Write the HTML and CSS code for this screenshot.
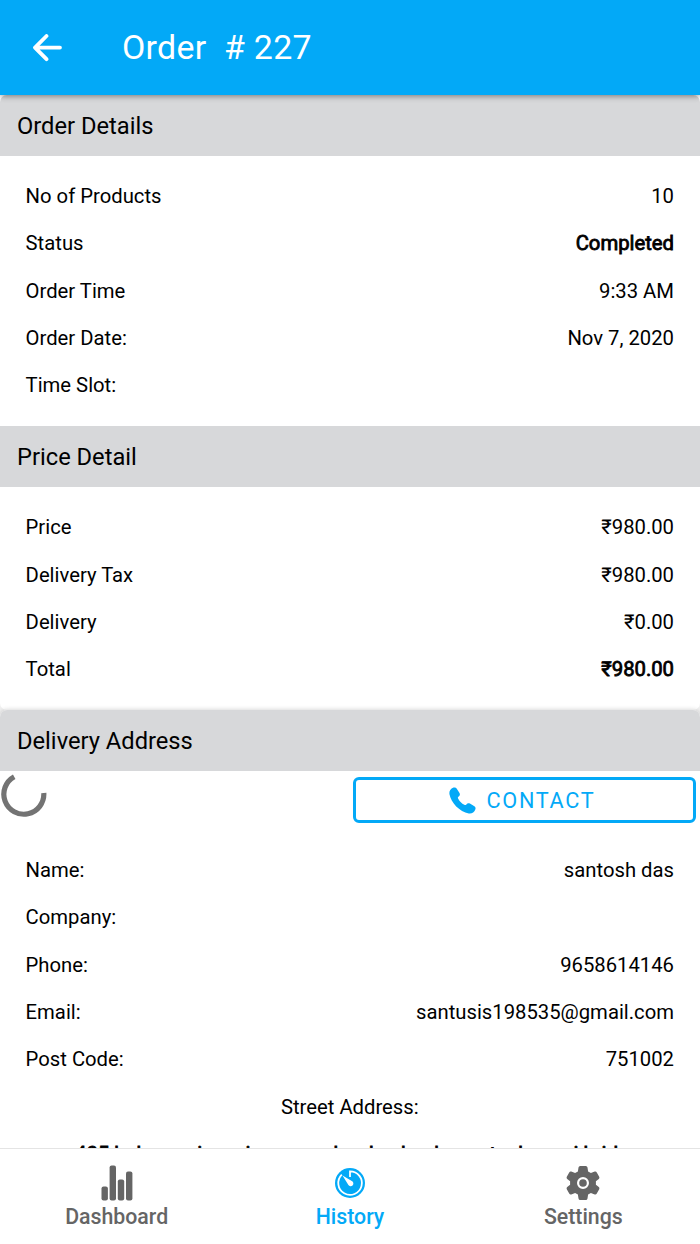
FILE: index.html
```html
<!DOCTYPE html>
<html lang="en">
<head>
<meta charset="utf-8">
<title>Order # 227</title>
<link rel="stylesheet" href="styles.css">
</head>
<body>
<div class="app">
  <header class="topbar">
    <svg class="back" viewBox="0 0 30 28"><path d="M27 13.600H3M13.500 2L2 13.600L13.500 25.200" fill="none" stroke="currentColor" stroke-width="3.800" stroke-linecap="round" stroke-linejoin="round"/></svg>
    <h1 class="title">Order&nbsp; # 227</h1>
  </header>
  <main class="content">
    <section class="card">
      <h2 class="heading">Order Details</h2>
      <div class="rows">
        <div class="row"><span>No of Products</span><span>10</span></div>
        <div class="row"><span>Status</span><span class="strong">Completed</span></div>
        <div class="row"><span>Order Time</span><span>9:33 AM</span></div>
        <div class="row"><span>Order Date:</span><span>Nov 7, 2020</span></div>
        <div class="row"><span>Time Slot:</span></div>
      </div>
    </section>
    <section class="card price">
      <h2 class="heading square">Price Detail</h2>
      <div class="rows">
        <div class="row"><span>Price</span><span>₹980.00</span></div>
        <div class="row"><span>Delivery Tax</span><span>₹980.00</span></div>
        <div class="row"><span>Delivery</span><span>₹0.00</span></div>
        <div class="row"><span>Total</span><span class="strong">₹980.00</span></div>
      </div>
    </section>
    <section class="card delivery">
      <h2 class="heading">Delivery Address</h2>
      <div class="actions">
        <svg class="spinner" viewBox="0 0 48 48"><path d="M14.200 4.700A20 20 0 1 0 43.800 21" fill="none" stroke="#737373" stroke-width="5.200"/></svg>
        <button class="contact">
          <svg class="phone" viewBox="0 0 27 27"><path d="M4.500.6C6 .1 7 .5 7.800 1.700L10.500 6C11.200 7.500 11 8.500 9.700 9.500C8.700 10.300 8.700 10.800 9.200 11.700C10.700 14.400 12.700 16.300 15.300 17.800C16.200 18.300 16.700 18.200 17.400 17.400C18.400 16 19.500 15.800 20.900 16.600L25.400 19.300C26.600 20.100 26.900 21.100 26.300 22.600C25.200 25.300 22.800 27 19.800 26.500C10.500 24.500 2 16 .4 7C0 4 1.700 1.700 4.500.6Z" fill="currentColor"/></svg>
          <span>CONTACT</span>
        </button>
      </div>
      <div class="rows address">
        <div class="row"><span>Name:</span><span>santosh das</span></div>
        <div class="row"><span>Company:</span></div>
        <div class="row"><span>Phone:</span><span>9658614146</span></div>
        <div class="row"><span>Email:</span><span>santusis198535@gmail.com</span></div>
        <div class="row"><span>Post Code:</span><span>751002</span></div>
        <div class="row center"><span>Street Address:</span></div>
        <div class="row center"><span class="strong">405 bahuna ni nua i nagar sahard nahanh caretank neari brirh</span></div>
      </div>
    </section>
  </main>
  <nav class="tabs">
    <a class="tab">
      <svg class="icon" viewBox="0 0 36 36"><g fill="currentColor"><rect x="2.500" y="21.500" width="6.400" height="14" rx="2"/><rect x="10.600" y=".5" width="6.400" height="35" rx="2"/><rect x="18.800" y="14.500" width="6.400" height="21" rx="2"/><rect x="27" y="6.500" width="6.400" height="29" rx="2"/></g></svg>
      <span>Dashboard</span>
    </a>
    <a class="tab active">
      <svg class="icon" viewBox="0 0 36 36"><circle cx="18" cy="18" r="15" fill="currentColor"/><path d="M18 12V6.300A11.800 11.800 0 1 1 9.800 9.700" fill="none" stroke="#fff" stroke-width="1.800"/><path d="M10.500 10.500L20.200 16.300A2.700 2.700 0 1 1 16.400 20Z" fill="#fff"/></svg>
      <span>History</span>
    </a>
    <a class="tab">
      <svg class="icon" viewBox="0 0 36 36"><path d="M13.500 2.500Q13.700 1 15.200 1H20.800Q22.300 1 22.500 2.500L23.100 6.500L25.900 8.100L29.700 6.600Q31 6.100 31.800 7.400L34.200 11.800Q34.900 13 33.800 13.900L30.900 16.300V19.700L33.800 22.100Q34.900 23 34.200 24.200L31.800 28.600Q31 29.900 29.700 29.400L25.900 27.900L23.100 29.500L22.500 33.500Q22.300 35 20.800 35H15.200Q13.700 35 13.500 33.500L12.900 29.500L10.100 27.900L6.300 29.400Q5 29.900 4.200 28.600L1.800 24.200Q1.100 23 2.200 22.100L5.100 19.700V16.300L2.200 13.900Q1.100 13 1.800 11.800L4.200 7.400Q5 6.100 6.300 6.600L10.100 8.100L12.900 6.500Z" fill="currentColor"/><circle cx="18" cy="18" r="4.900" fill="none" stroke="#fff" stroke-width="2.200"/></svg>
      <span>Settings</span>
    </a>
  </nav>
</div>
</body>
</html>
```
FILE: styles.css
```css
* { box-sizing: border-box; }
body { margin: 0; font-family: Roboto, "Noto Sans", sans-serif; color: #000; background: #fff; }
.app { height: 1244px; width: 700px; display: flex; flex-direction: column; overflow: hidden; }
.topbar { flex: none; height: 95px; background: #03a9f7; color: #fff; display: flex; align-items: center; padding-left: 33px; gap: 59px; box-shadow: 0 1px 6px rgba(0,0,0,.45); z-index: 1; }
.back { width: 30px; height: 28px; }
.title { margin: 0; font-size: 33.900px; font-weight: 400; letter-spacing: .3px; white-space: pre; }
.content { flex: 1; min-height: 0; overflow: hidden; background: #f0f0f0; }
.card { background: #fff; }
.price { border-radius: 0 0 7px 7px; margin-bottom: .2px; }
.delivery { position: relative; border-radius: 7px 7px 0 0; box-shadow: 0 0 5px rgba(0,0,0,.2); }
.heading { margin: 0; height: 60.500px; padding-left: 17px; line-height: 62px; font-size: 23.700px; font-weight: 400; background: #d7d8da; border-radius: 7px 7px 0 0; }
.square { border-radius: 0; }
.rows { padding: 17.600px 26px 16.400px 25.600px; font-size: 20.250px; }
.row { height: 47.330px; line-height: 47.330px; display: flex; justify-content: space-between; white-space: nowrap; }
.center { justify-content: center; }
.strong { -webkit-text-stroke: .8px currentColor; }
.actions { height: 60px; padding: 0 4px 0 0; display: flex; justify-content: space-between; align-items: flex-start; }
.spinner { width: 48px; height: 48px; margin-top: 1.500px; }
.contact { width: 343px; height: 46px; margin-top: 6.300px; border: 3px solid #03a9f7; border-radius: 6px; background: #fff; color: #03a9f7; font: 21.700px Roboto, sans-serif; letter-spacing: 1.700px; display: flex; align-items: center; justify-content: center; gap: 11px; padding: 1.600px 5px 0 0; }
.phone { width: 27px; height: 27px; }
.address { padding-top: 16.500px; }
.tabs { flex: none; height: 96px; border-top: 1px solid #e4e4e4; background: #fff; display: flex; z-index: 1; color: #656565; }
.tab { flex: 1; display: flex; flex-direction: column; align-items: center; padding-top: 16px; font-size: 21.300px; font-weight: 500; line-height: 32px; }
.icon { width: 36px; height: 36px; }
.active { color: #03a9f7; }
```
